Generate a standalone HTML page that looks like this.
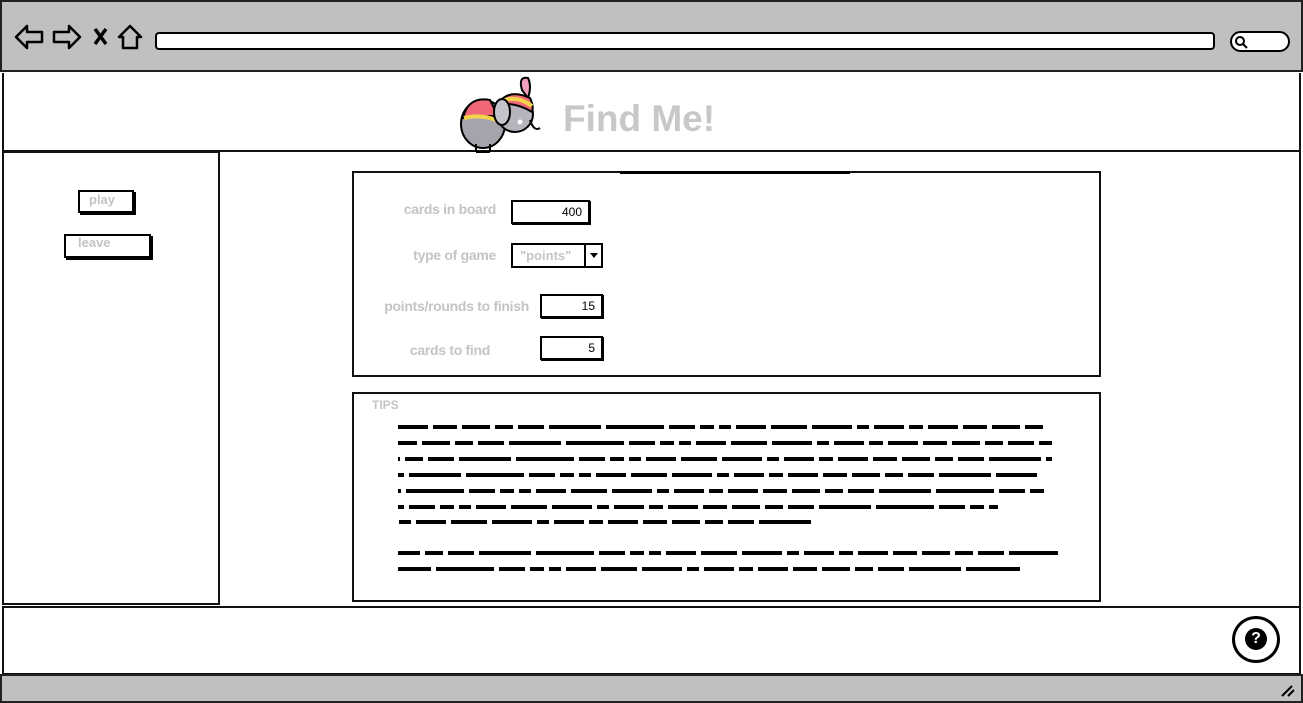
<!DOCTYPE html>
<html><head><style>
*{margin:0;padding:0;box-sizing:border-box}
body{width:1303px;height:703px;background:#fff;position:relative;overflow:hidden;font-family:"Liberation Sans",sans-serif}
.a{position:absolute}
.lbl{position:absolute;color:#c4c4c4;font-weight:bold;font-size:14px;text-align:right;letter-spacing:-0.3px}
.inp{position:absolute;border:2px solid #000;background:#fff;font-size:12px;text-align:right;padding-right:6px;line-height:20px;box-shadow:1px 1px 0 #000}
</style></head><body>
<div class="a" style="left:0;top:0;width:1303px;height:72px;background:#c0c0c0;border:2px solid #222"></div>
<svg class="a" style="left:14px;top:22px" width="130" height="30" viewBox="0 0 130 30" fill="none" stroke="#000" stroke-width="2.5" stroke-linejoin="round">
<path d="M2 15 L13 4 L13 10 L28 10 L28 20 L13 20 L13 26 Z"/>
<path d="M66 15 L55 4 L55 10 L40 10 L40 20 L55 20 L55 26 Z"/>
<path d="M81 7 L92 22 M92 7 L81 22" stroke-width="3.5"/>
<path d="M105 15 L116 4 L127 15 L123 15 L123 26 L109 26 L109 15 Z"/>
</svg>
<div class="a" style="left:155px;top:32px;width:1060px;height:18px;background:#fff;border:2px solid #000;border-radius:4px"></div>
<div class="a" style="left:1230px;top:31px;width:60px;height:21px;background:#fff;border:2px solid #000;border-radius:11px"></div>
<svg class="a" style="left:1234px;top:35px" width="14" height="14"><circle cx="6" cy="6" r="4" fill="none" stroke="#000" stroke-width="2"/><path d="M9 9 L13 13" stroke="#000" stroke-width="2"/></svg>
<div class="a" style="left:2px;top:73px;width:1299px;height:79px;border:2px solid #111;border-top:none"></div>
<svg class="a" style="left:458px;top:72px" width="84" height="82" viewBox="0 0 84 82">
<ellipse cx="25" cy="52" rx="22" ry="24" fill="#a6a3ad" stroke="#000" stroke-width="2"/>
<path d="M5 46 Q10 24 32 28 L40 44 Q20 44 5 46Z" fill="#f06878" stroke="#000" stroke-width="2"/>
<path d="M6 46 Q22 42 38 48" stroke="#f3d34a" stroke-width="4" fill="none"/>
<path d="M70 6 Q60 4 64 18 L70 26 Q74 14 70 6Z" fill="#f2a0c0" stroke="#000" stroke-width="2"/>
<circle cx="57" cy="42" r="18" fill="#b7b4bd" stroke="#000" stroke-width="2"/>
<path d="M40 32 Q50 16 72 26 Q76 34 74 40 Q58 30 40 32Z" fill="#f06878" stroke="#000" stroke-width="2"/>
<path d="M42 30 Q58 22 74 34" stroke="#f3d34a" stroke-width="4" fill="none"/>
<ellipse cx="44" cy="40" rx="8" ry="13" fill="#c7c3cc" stroke="#000" stroke-width="2"/>
<path d="M72 48 Q76 60 82 56" stroke="#000" stroke-width="2" fill="none"/>
<circle cx="62" cy="50" r="2.5" fill="#fff"/>
<path d="M18 72 L18 80 M32 72 L32 80 M18 80 L32 80" stroke="#000" stroke-width="2"/>
</svg>
<div class="a" style="left:563px;top:98px;font-size:37px;font-weight:bold;color:#c8c8c8;letter-spacing:0px">Find Me!</div>
<div class="a" style="left:2px;top:151px;width:218px;height:454px;border:2px solid #111"></div>
<div class="a" style="left:218px;top:151px;width:1083px;height:456px;border-right:2px solid #111"></div>
<div class="a" style="left:78px;top:190px;width:56px;height:23px;border:2px solid #000;box-shadow:2px 2px 0 #000;color:#c4c4c4;font-weight:bold;font-size:13px;padding-left:9px;line-height:16px">play</div>
<div class="a" style="left:64px;top:234px;width:87px;height:24px;border:2px solid #000;box-shadow:2px 2px 0 #000;color:#c4c4c4;font-weight:bold;font-size:13px;padding-left:12px;line-height:14px">leave</div>
<div class="a" style="left:352px;top:171px;width:749px;height:206px;border:2px solid #111"></div>
<div class="a" style="left:620px;top:171px;width:230px;height:3px;background:#000"></div>
<div class="lbl" style="left:360px;top:201px;width:136px">cards in board</div>
<div class="inp" style="left:511px;top:200px;width:79px;height:24px">400</div>
<div class="lbl" style="left:360px;top:247px;width:136px">type of game</div>
<div class="a" style="left:511px;top:243px;width:92px;height:25px;border:2px solid #000"></div>
<div class="a" style="left:520px;top:248px;color:#c4c4c4;font-weight:bold;font-size:13px">"points"</div>
<div class="a" style="left:584px;top:243px;width:2px;height:25px;background:#000"></div>
<div class="a" style="left:590px;top:253px;border-left:4px solid transparent;border-right:4px solid transparent;border-top:5px solid #000"></div>
<div class="lbl" style="left:360px;top:298px;width:169px">points/rounds to finish</div>
<div class="inp" style="left:540px;top:294px;width:63px;height:24px">15</div>
<div class="lbl" style="left:360px;top:342px;width:130px">cards to find</div>
<div class="inp" style="left:540px;top:336px;width:63px;height:24px">5</div>
<div class="a" style="left:352px;top:392px;width:749px;height:210px;border:2px solid #111"></div>
<div class="a" style="left:372px;top:398px;color:#c4c4c4;font-weight:bold;font-size:12px">TIPS</div>
<svg class="a" style="left:0;top:0" width="1303" height="703" fill="none" stroke="#000" stroke-width="4">
<g stroke-dasharray="30 5 24 5 28 5 18 5 26 5 52 5 58 5 26 5 14 5 12 5 30 5 36 5 40 5 12 5 30 5 14 5">
<path d="M398 427 H1043"/>
<path d="M398 443 H1052" stroke-dashoffset="40"/>
<path d="M398 459 H1052" stroke-dashoffset="90"/>
<path d="M398 475 H1037" stroke-dashoffset="140"/>
<path d="M398 491 H1044" stroke-dashoffset="200"/>
<path d="M398 507 H998" stroke-dashoffset="260"/>
<path d="M398 522 H813" stroke-dashoffset="320"/>
<path d="M398 553 H1058" stroke-dashoffset="70"/>
<path d="M398 569 H1020" stroke-dashoffset="170"/>
</g></svg>
<div class="a" style="left:2px;top:606px;width:1299px;height:69px;border:2px solid #111"></div>
<div class="a" style="left:1232px;top:616px;width:48px;height:47px;border:3px solid #000;border-radius:50%"></div>
<div class="a" style="left:1245px;top:628px;width:22px;height:22px;background:#000;border-radius:50%;color:#fff;font-weight:bold;font-size:16px;text-align:center;line-height:22px">?</div>
<div class="a" style="left:0;top:674px;width:1303px;height:29px;background:#c0c0c0;border:2px solid #222"></div>
<svg class="a" style="left:1280px;top:682px" width="16" height="16"><path d="M2 14 L12 4 M8 14 L14 8" stroke="#000" stroke-width="2"/></svg>
</body></html>
